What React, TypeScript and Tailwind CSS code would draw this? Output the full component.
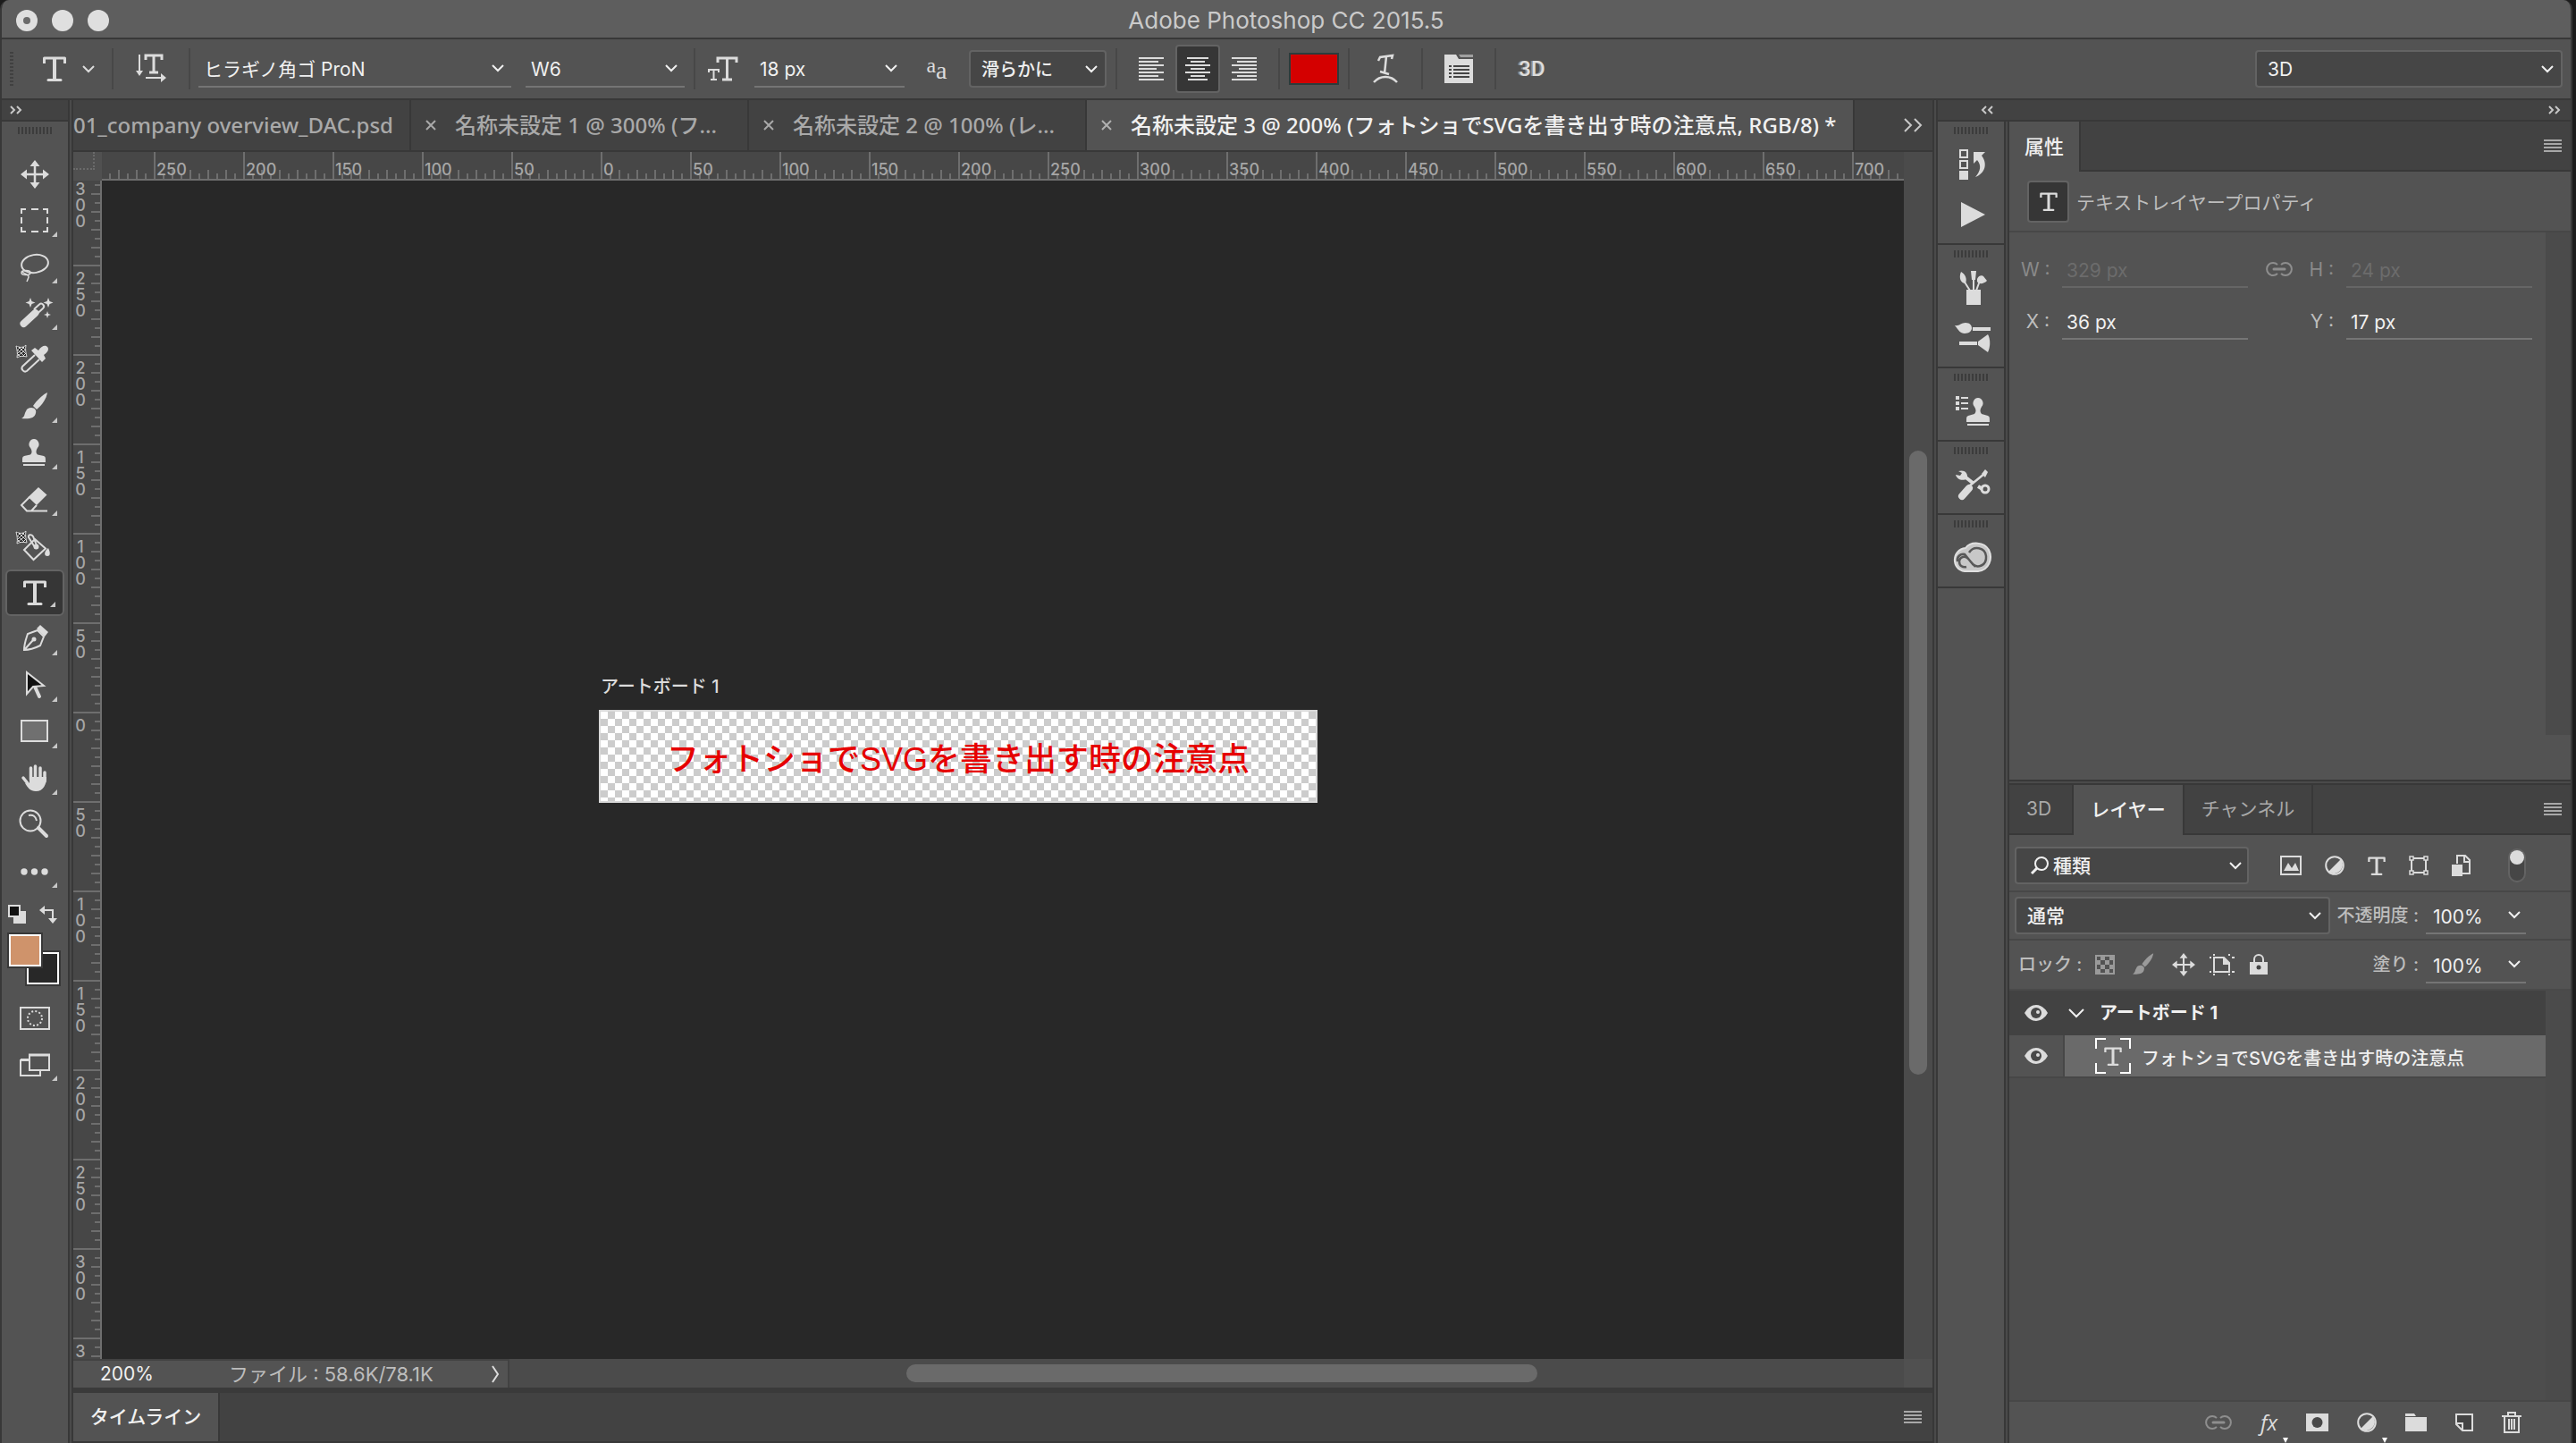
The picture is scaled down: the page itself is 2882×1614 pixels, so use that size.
import type { ReactNode } from 'react';
import clsx from 'clsx';

const TOP_UNITS = ['', '250', '200', '150', '100', '50', '0', '50', '100', '150', '200', '250', '300', '350', '400', '450', '500', '550', '600', '650', '700'];
const SIDE_UNITS = ['300', '250', '200', '150', '100', '50', '0', '50', '100', '150', '200', '250', '300', '3'];
const MINOR_TICKS = [1, 2, 3, 4, 5, 6, 7, 8, 9];

interface IconProps {
  w?: number;
  h?: number;
  children: ReactNode;
  className?: string;
}

function Icon({ w = 40, h = 40, children, className }: IconProps) {
  return (
    <svg
      width={w}
      height={h}
      viewBox={`0 0 ${w} ${h}`}
      fill="none"
      stroke="currentColor"
      strokeWidth="2"
      aria-hidden="true"
      className={clsx('shrink-0 overflow-visible', className)}
    >
      {children}
    </svg>
  );
}

function Chevron({ className }: { className?: string }) {
  return (
    <Icon w={14} h={8} className={className}>
      <path d="M1 1l6 6 6-6" />
    </Icon>
  );
}

function DoubleChevron({ left, big }: { left?: boolean; big?: boolean }) {
  return (
    <svg
      width={big ? 22 : 14}
      height={big ? 16 : 10}
      viewBox={big ? '0 0 22 16' : '0 0 14 10'}
      fill="none"
      stroke="currentColor"
      strokeWidth="2"
      aria-hidden="true"
      className={clsx('shrink-0', left && 'rotate-180')}
    >
      <path d={big ? 'M1 1l7 7-7 7M12 1l7 7-7 7' : 'M1 1l4 4-4 4M8 1l4 4-4 4'} />
    </svg>
  );
}

function MenuButton({ label }: { label: string }) {
  return (
    <button type="button" aria-label={label} className="text-[#a8a8a8]">
      <Icon w={20} h={14}>
        <path d="M0 1h20M0 5h20M0 9h20M0 13h20" />
      </Icon>
    </button>
  );
}

function TypeIcon({ w = 26, h = 28 }: { w?: number; h?: number }) {
  return (
    <svg width={w} height={h} viewBox="0 0 26 28" fill="none" stroke="currentColor" aria-hidden="true" className="shrink-0">
      <path d="M1.500 8V2h23v6" strokeWidth="3" strokeLinejoin="round" />
      <path d="M13 2v24" strokeWidth="4" />
      <path d="M6 26.500h14" strokeWidth="3" strokeLinecap="round" />
    </svg>
  );
}

function AdjustIcon() {
  return (
    <Icon w={22} h={22}>
      <circle cx="11" cy="11" r="9.800" />
      <path d="M18 4A10 10 0 0 1 4 18z" fill="currentColor" stroke="none" />
    </Icon>
  );
}

function LinkIcon() {
  return (
    <Icon w={30} h={18} className="text-[#8e8e8e]">
      <path d="M13 4a7 7 0 1 0 0 10M17 4a7 7 0 1 1 0 10" />
      <path d="M9 9h12" strokeWidth="3" strokeLinecap="round" />
    </Icon>
  );
}

function MoveIcon({ size = 32 }: { size?: number }) {
  return (
    <svg width={size} height={size} viewBox="0 0 32 32" aria-hidden="true" className="shrink-0">
      <path d="M4 16h24M16 4v24" stroke="currentColor" strokeWidth="2.500" />
      <path d="M16 0l5.500 7h-11zM16 32l5.500-7h-11zM0 16l7-5.500v11zM32 16l-7-5.500v11z" fill="currentColor" />
    </svg>
  );
}

function Mesh() {
  return (
    <g strokeWidth="1">
      <path d="M0 2c4 2 8 2 11-1-1 5 0 9 1 13-4-1-8-1-11 1 1-5 0-9-1-13z" fill="#222" />
      <path d="M3 3l8 8M1 6l8 7M7 3l4 4M1 10l4 4M9 3l-8 8M11 6l-9 7M5 3L1 7M11 10l-4 4" />
    </g>
  );
}

function Brush({ size = 40 }: { size?: number }) {
  return (
    <svg width={size} height={size} viewBox="0 0 40 40" fill="currentColor" aria-hidden="true" className="shrink-0">
      <path d="M34 4c-6 3-12 9-16 15l4 4c6-5 11-12 12-19z" />
      <path d="M16 21c4 0 6 3 5 6-1 6-8 7-16 6 4-2 3-5 5-8 1-3 3-4 6-4z" />
    </svg>
  );
}

const TOOLS: { label: string; flyout?: boolean; active?: boolean; icon: ReactNode }[] = [
  { label: '移動ツール', icon: <MoveIcon /> },
  {
    label: '長方形選択ツール',
    flyout: true,
    icon: (
      <Icon>
        <path d="M5 12V7h5M16 7h8M29 7h5v5M34 16v7M34 27v5h-5M24 32h-8M10 32H5v-5M5 23v-7" />
      </Icon>
    ),
  },
  {
    label: 'なげなわツール',
    flyout: true,
    icon: (
      <Icon>
        <ellipse cx="20" cy="16" rx="15" ry="10" transform="rotate(-9 20 16)" />
        <ellipse cx="10" cy="26" rx="5" ry="2.500" strokeWidth="1.500" />
        <path d="M6 24c0 4 8 3 7 7-1 3-1 3-2 5" strokeWidth="1.500" />
      </Icon>
    ),
  },
  {
    label: '自動選択ツール',
    flyout: true,
    icon: (
      <Icon>
        <path d="M7.500 31l13-12" strokeWidth="8" strokeLinecap="round" />
        <path d="M19 15l6-5.500a3 3 0 0 1 4 4.500l-6 5.500" />
        <g fill="currentColor" stroke="none">
          <path d="M15 2l1.500 4 4 1.500-4 1.500-1.500 4-1.500-4-4-1.500 4-1.500z" />
          <path d="M35 2l1.500 4 4 1.500-4 1.500-1.500 4-1.500-4-4-1.500 4-1.500z" />
          <path d="M34 17l1 3 3 1-3 1-1 3-1-3-3-1 3-1z" />
        </g>
      </Icon>
    ),
  },
  {
    label: 'スポイトツール',
    icon: (
      <Icon>
        <g transform="translate(-1 2)"><Mesh /></g>
        <path d="M20 14L6 27c-2 3 2 7 5 5l14-13" />
        <path d="M16 9l4-3 4 3c4-6 8-6 10-4s1 6-4 9l2 4-4 4z" fill="currentColor" stroke="none" />
      </Icon>
    ),
  },
  { label: 'ブラシツール', flyout: true, icon: <Brush /> },
  {
    label: 'コピースタンプツール',
    flyout: true,
    icon: (
      <Icon>
        <path
          d="M19 4a6 6 0 0 1 4 10c-2 3-2 6 0 7.500l7 1.500c2 1 2 2 2 7H6c0-5 0-6 2-7l7-1.500c2-1.500 2-4.500 0-7.500a6 6 0 0 1 4-10z"
          fill="currentColor"
          stroke="none"
        />
        <path d="M7 33h24" />
      </Icon>
    ),
  },
  {
    label: '消しゴムツール',
    flyout: true,
    icon: (
      <Icon>
        <path d="M24 6l9.500 8.500L22 26l-9.500-9z" fill="currentColor" stroke="none" />
        <path d="M14 17l-9 9 6 6.500h5l6-6.500M11 32.500h23" />
      </Icon>
    ),
  },
  {
    label: '塗りつぶしツール',
    icon: (
      <Icon>
        <g transform="translate(-1 2)"><Mesh /></g>
        <path d="M20 12l12 10.500L18.500 35 8 24zM20 21l-7-11c-1-3 3-4 5-1l4 10" />
        <circle cx="21.500" cy="20.500" r="2" fill="currentColor" />
        <path d="M35 22c2 4 3 9-1 9s-4-5 1-9z" fill="currentColor" stroke="none" />
      </Icon>
    ),
  },
  { label: '横書き文字ツール', flyout: true, active: true, icon: <TypeIcon /> },
  {
    label: 'ペンツール',
    flyout: true,
    icon: (
      <Icon>
        <path d="M8 32c0-7 2-12 4-18l11-4 7 7-4 10c-6 3-12 5-18 5zM8 32l10-11" />
        <path d="M22 8l4-4 9 8-4 5z" fill="currentColor" stroke="none" />
        <circle cx="19" cy="20" r="2.500" fill="currentColor" stroke="none" />
      </Icon>
    ),
  },
  {
    label: 'パスコンポーネント選択ツール',
    flyout: true,
    icon: (
      <Icon>
        <path d="M20 21l5 11" strokeWidth="4" strokeLinecap="round" />
        <path d="M11 5v24l7-8 12-1z" fill="#111" />
      </Icon>
    ),
  },
  {
    label: '長方形ツール',
    flyout: true,
    icon: (
      <Icon>
        <path d="M5 7h29v23H5z" fill="#707070" />
      </Icon>
    ),
  },
  {
    label: '手のひらツール',
    flyout: true,
    icon: (
      <Icon>
        <g strokeWidth="3.500" strokeLinecap="round">
          <path d="M15.500 8v13M20.500 6v14M26 8v13M31 13v10M7 19l8 10" />
        </g>
        <path d="M14 18h19c0 8-3 16-12 16-6 0-9-4-12-9l5 1z" fill="currentColor" stroke="none" />
      </Icon>
    ),
  },
  {
    label: 'ズームツール',
    icon: (
      <Icon>
        <circle cx="15" cy="15" r="11.500" />
        <path d="M13 9c5-1 8 1 9 6" />
        <path d="M24 23l9 9" strokeWidth="4" strokeLinecap="round" />
      </Icon>
    ),
  },
  {
    label: 'ツールバーを編集',
    flyout: true,
    icon: (
      <Icon>
        <g fill="currentColor" stroke="none">
          <circle cx="8" cy="20" r="3.700" />
          <circle cx="19.500" cy="20" r="3.700" />
          <circle cx="31" cy="20" r="3.700" />
        </g>
      </Icon>
    ),
  },
];

function Grip() {
  return (
    <div className="mx-auto h-2 w-[38px] bg-[repeating-linear-gradient(90deg,#3c3c3c_0_2px,transparent_2px_4px)]" />
  );
}

function Flyout() {
  return <span className="absolute right-2 bottom-2 size-[6px] bg-[#c8c8c8] [clip-path:polygon(100%_0,100%_100%,0_100%)]" />;
}

function Gutter() {
  return <div className="w-[6px] shrink-0 border-x-2 border-[#383838] bg-[#4a4a4a]" />;
}

function Separator() {
  return <div className="h-[46px] w-[2px] shrink-0 bg-[#474747]" />;
}

interface SelectProps {
  label: string;
  value: string;
  className?: string;
  boxed?: boolean;
}

function Select({ label, value, className, boxed }: SelectProps) {
  return (
    <div
      className={clsx(
        'grid h-[42px] shrink-0 items-center',
        boxed ? 'rounded-[4px] border-2 border-[#636363] bg-[#464646]' : 'border-b-2 border-[#757575]',
        className,
      )}
    >
      <select
        aria-label={label}
        className={clsx('[grid-area:1/1] h-full w-full appearance-none bg-transparent', boxed ? 'pt-[2px] pl-[12px]' : 'pt-1 pl-[6px]')}
      >
        <option>{value}</option>
      </select>
      <Chevron className="pointer-events-none [grid-area:1/1] mr-[8px] justify-self-end" />
    </div>
  );
}

function OptionsBar() {
  return (
    <div className="flex h-[68px] shrink-0 items-center border-b-2 border-[#383838] bg-[#535353] px-[9px] text-[21px] text-[#f0f0f0]">
      <div className="h-[38px] w-[4px] bg-[repeating-linear-gradient(#404040_0_2px,transparent_2px_4px)]" />
      <button type="button" aria-label="ツールプリセット" className="flex w-[110px] items-center gap-[18px] pl-[33px] text-[#dcdcdc]">
        <TypeIcon />
        <Chevron />
      </button>
      <Separator />
      <button type="button" aria-label="テキストの方向の切り替え" className="flex w-[84px] justify-center text-[#dcdcdc]">
        <Icon w={34} h={32}>
          <path d="M4 0v20M11 26h20" />
          <path d="M0 18l4 6 4-6zM28 21l6 5-6 5z" fill="currentColor" stroke="none" />
          <path d="M11 6V1h18v5M20 1v19M15 20h10" strokeWidth="3" />
        </Icon>
      </button>
      <Separator />
      <Select label="フォント" value="ヒラギノ角ゴ ProN" className="ml-[9px] w-[350px]" />
      <Select label="フォントスタイル" value="W6" className="mr-[10px] ml-4 w-[178px]" />
      <Separator />
      <div className="flex w-[66px] pl-[14px] text-[#dcdcdc]">
        <Icon w={34} h={28}>
          <path d="M11 7V2h21v5M21.500 2v24M16 26h11" strokeWidth="3" />
          <path d="M1 18v-3h11v3M6.500 15v11M3 26h7" />
        </Icon>
      </div>
      <Select label="フォントサイズ" value="18 px" className="w-[168px]" />
      <div className="flex w-[72px] justify-center font-['Liberation_Serif',serif] text-[#dcdcdc]">
        <span className="text-[24px] leading-[24px]">a</span>
        <span className="pt-1 text-[28px] leading-[28px]">a</span>
      </div>
      <Select label="アンチエイリアスの種類" value="滑らかに" boxed className="mr-[10px] w-[154px] text-[20px] font-medium" />
      <Separator />
      <div className="flex w-[180px] items-center justify-center gap-[2px] text-[#dcdcdc]">
        <button type="button" aria-label="左揃え" className="flex h-[54px] w-[50px] items-center justify-center">
          <Icon w={28} h={26}>
            <path d="M0 1h28M0 5h22M0 9h28M0 13h20M0 17h28M0 21h22M0 25h28" />
          </Icon>
        </button>
        <button
          type="button"
          aria-label="中央揃え"
          aria-pressed="true"
          className="flex h-[54px] w-[50px] items-center justify-center rounded-[4px] border-2 border-[#636363] bg-[#363636]"
        >
          <Icon w={28} h={26}>
            <path d="M2 1h24M6 5h16M0 9h28M6 13h16M0 17h28M6 21h16M3 25h22" />
          </Icon>
        </button>
        <button type="button" aria-label="右揃え" className="flex h-[54px] w-[50px] items-center justify-center">
          <Icon w={28} h={26}>
            <path d="M0 1h28M6 5h22M0 9h28M8 13h20M0 17h28M6 21h22M0 25h28" />
          </Icon>
        </button>
      </div>
      <Separator />
      <button type="button" aria-label="テキストカラー" className="mx-[10px] h-[36px] w-[56px] border-2 border-[#2c3c3c] bg-[#d40000]" />
      <Separator />
      <button type="button" aria-label="ワープテキスト" className="flex w-[80px] justify-center text-[#dcdcdc]">
        <Icon w={28} h={32}>
          <path d="M6 7l2-4 14-2-1 4M15 2l-2 19M8 19l10 3M1 31c7-8 19-8 26 0" strokeWidth="2.500" />
        </Icon>
      </button>
      <Separator />
      <button type="button" aria-label="文字パネルの切り替え" className="flex w-[80px] justify-center text-[#dcdcdc]">
        <Icon w={32} h={32}>
          <path d="M0 0h13l3 5h16v27H0z" fill="currentColor" stroke="none" />
          <path d="M16 0h16v3H18z" fill="#a0a0a0" stroke="none" />
          <path d="M5 13h3M10 13h18M5 17h3M10 17h18M5 21h3M10 21h18M5 25h3M10 25h18" stroke="#444" />
        </Icon>
      </button>
      <Separator />
      <button type="button" className="w-[80px] text-center font-['Roboto',sans-serif] text-[24px] font-medium text-[#dcdcdc] [text-shadow:-2px_0_#8a8a8a]">
        3D
      </button>
      <Select label="ワークスペース" value="3D" boxed className="ml-auto w-[344px]" />
    </div>
  );
}

function ToolBar() {
  return (
    <div className="flex w-[74px] shrink-0 flex-col bg-[#535353]">
      <div className="flex h-[24px] items-center border-b-2 border-[#383838] bg-[#424242] pl-[9px] text-[#c8c8c8]">
        <DoubleChevron />
      </div>
      <div className="pt-[6px] pb-[19px]">
        <Grip />
      </div>
      <div className="flex flex-col items-center text-[#dcdcdc]">
        {TOOLS.map(tool => (
          <button
            key={tool.label}
            type="button"
            aria-label={tool.label}
            className={clsx(
              'relative flex h-[52px] w-[66px] items-center justify-center',
              tool.active && 'rounded-[6px] border-2 border-[#636363] bg-[#363636]',
            )}
          >
            {tool.icon}
            {tool.flyout && <Flyout />}
          </button>
        ))}
      </div>
      <div className="flex justify-between px-[7px] pt-[11px] text-[#dcdcdc]">
        <button type="button" aria-label="初期設定の描画色と背景色">
          <Icon w={20} h={21}>
            <path d="M6 7h14v14H6z" fill="currentColor" stroke="none" />
            <path d="M1 1h12v12H1z" fill="#111" />
          </Icon>
        </button>
        <button type="button" aria-label="描画色と背景色を入れ替え" className="mr-[5px]">
          <Icon w={20} h={20}>
            <path d="M5 5h10v10" />
            <path d="M0 5l6-5v10zM10 14h10l-5 6z" fill="currentColor" stroke="none" />
          </Icon>
        </button>
      </div>
      <div className="grid grid-cols-[20px_20px_20px] grid-rows-[20px_20px_20px] px-[6px] pt-[10px]">
        <button
          type="button"
          aria-label="背景色"
          className="col-start-2 col-end-4 row-start-2 row-end-4 border-2 border-[#383838] bg-[#282828] outline-2 -outline-offset-4 outline-white"
        />
        <button
          type="button"
          aria-label="描画色"
          className="col-start-1 col-end-3 row-start-1 row-end-3 border-2 border-[#383838] bg-[#cf936b] outline-2 -outline-offset-4 outline-white"
        />
      </div>
      <div className="flex flex-col items-center pt-[10px] text-[#dcdcdc]">
        <button type="button" aria-label="クイックマスクモード" className="flex h-[52px] w-[66px] items-center justify-center">
          <Icon w={34} h={26}>
            <path d="M1 1h32v24H1z" />
            <circle cx="17" cy="13" r="8" strokeDasharray="2 2.200" />
          </Icon>
        </button>
        <button type="button" aria-label="スクリーンモード" className="relative flex h-[52px] w-[66px] items-center justify-center">
          <Icon w={34} h={26}>
            <path d="M11 8H1v17h22v-5M1 7h10" />
            <path d="M11 2h22v17H11z" />
            <path d="M10 2h24" strokeWidth="3" />
          </Icon>
          <Flyout />
        </button>
      </div>
    </div>
  );
}

const DOCUMENTS = ['名称未設定 1 @ 300% (フ...', '名称未設定 2 @ 100% (レ...'];

function CloseIcon() {
  return (
    <Icon w={14} h={14}>
      <path d="M2 2l10 10M12 2L2 12" />
    </Icon>
  );
}

function DocumentTabs() {
  return (
    <div className="flex h-[58px] shrink-0 border-b-2 border-[#383838] bg-[#424242] font-['Noto_Sans','Noto_Sans_CJK_JP',sans-serif] text-[24px] font-medium whitespace-nowrap text-[#a9a9a9]">
      <button type="button" className="flex w-[378px] shrink-0 items-center justify-end overflow-hidden border-r-2 border-[#383838] pr-[18px]">
        01_company overview_DAC.psd
      </button>
      {DOCUMENTS.map(name => (
        <button key={name} type="button" className="flex w-[378px] shrink-0 items-center gap-5 border-r-2 border-[#383838] pl-[15px]">
          <CloseIcon />
          {name}
        </button>
      ))}
      <button type="button" className="flex shrink-0 items-center gap-5 border-r-2 border-[#383838] bg-[#535353] pr-[18px] pl-[15px] text-[#f0f0f0]">
        <span className="text-[#b0b0b0]"><CloseIcon /></span>
        名称未設定 3 @ 200% (フォトショでSVGを書き出す時の注意点, RGB/8) *
      </button>
      <button type="button" aria-label="その他のドキュメント" className="mr-[10px] ml-auto text-[#c8c8c8]">
        <DoubleChevron big />
      </button>
    </div>
  );
}

function TopRuler() {
  return (
    <div className="flex h-[32px] min-w-0 flex-1 overflow-hidden border-b-2 border-[#6e6e6e] bg-[#474747]">
      <div className="-ml-[42px] flex">
        {TOP_UNITS.map((unit, i) => (
          <div key={i} className="grid w-[100px] shrink-0 border-l-2 border-[#6e6e6e]">
            <div className="[grid-area:1/1] flex items-end gap-2 pl-2">
              {MINOR_TICKS.map(t => (
                <span key={t} className={clsx('w-[2px] bg-[#6e6e6e]', t % 2 ? 'h-[6px]' : 'h-[10px]')} />
              ))}
            </div>
            <span className="[grid-area:1/1] self-end pl-px leading-[20px]">{unit}</span>
          </div>
        ))}
      </div>
    </div>
  );
}

function SideRuler() {
  return (
    <div className="w-[32px] shrink-0 overflow-hidden border-r-2 border-[#6e6e6e] bg-[#474747]">
      <div className="-mt-[6px]">
        {SIDE_UNITS.map((unit, i) => (
          <div key={i} className="grid h-[100px] border-t-2 border-[#6e6e6e]">
            <div className="[grid-area:1/1] flex flex-col items-end gap-2 pt-2">
              {MINOR_TICKS.map(t => (
                <span key={t} className={clsx('h-[2px] shrink-0 bg-[#6e6e6e]', t % 2 ? 'w-[6px]' : 'w-[10px]')} />
              ))}
            </div>
            <div className="[grid-area:1/1] flex w-[16px] flex-col items-center pt-[5px] leading-[18px]">
              {unit.split('').map((digit, d) => (
                <span key={d}>{digit}</span>
              ))}
            </div>
          </div>
        ))}
      </div>
    </div>
  );
}

function Canvas() {
  return (
    <div className="relative min-w-0 flex-1 overflow-hidden bg-[#282828]">
      <div className="absolute top-[548px] left-[556px]">
        <p className="pl-[2px] text-[20px] leading-[36px] font-medium text-[#dcdcdc]">アートボード 1</p>
        <div className="mt-2 flex h-[104px] w-[804px] items-center justify-center border-2 border-[#d8d8d8] bg-[repeating-conic-gradient(#ccc_0_25%,#fff_0_50%)] bg-[length:16px_16px] pt-2">
          <p className="font-['Liberation_Sans','Noto_Sans_CJK_JP',sans-serif] text-[36px] font-medium whitespace-nowrap text-[#e60000]">
            フォトショでSVGを書き出す時の注意点
          </p>
        </div>
      </div>
    </div>
  );
}

function Document() {
  return (
    <div className="flex min-w-0 flex-1 flex-col bg-[#3a3a3a]">
      <DocumentTabs />
      <div className="flex min-h-0 flex-1">
        <div className="flex min-w-0 flex-1 flex-col text-[18px] font-medium text-[#a6a6a6]">
          <div className="flex">
            <div className="grid w-[32px] shrink-0 grid-cols-[24px_1fr] grid-rows-[20px_1fr] bg-[#505050]">
              <div className="border-r-2 border-b-2 border-dotted border-[#6a6a6a]" />
            </div>
            <TopRuler />
          </div>
          <div className="flex min-h-0 flex-1">
            <SideRuler />
            <Canvas />
          </div>
        </div>
        <div className="flex w-[32px] shrink-0 flex-col bg-[#4b4b4b] px-[6px] pt-[334px]">
          <div className="h-[698px] rounded-full bg-[#6a6a6a]" />
        </div>
      </div>
      <div className="flex h-[32px] shrink-0 bg-[#4b4b4b] text-[21px]">
        <div className="flex w-[488px] items-center border-t-2 border-r-2 border-[#424242] bg-[#535353] pl-[30px]">
          <input aria-label="ズーム率" defaultValue="200%" className="w-[144px] bg-transparent text-[#f0f0f0]" />
          <span className="text-[22px] leading-[28px] whitespace-nowrap text-[#bdbdbd]">ファイル : 58.6K/78.1K</span>
          <button type="button" aria-label="ステータス表示" className="mr-[10px] ml-auto text-[#dcdcdc]">
            <Icon w={8} h={20}>
              <path d="M1 1l6 9-6 9" />
            </Icon>
          </button>
        </div>
        <div className="grid flex-1 grid-cols-[444fr_706fr_410fr] items-center">
          <div className="col-start-2 h-[20px] rounded-full bg-[#6a6a6a]" />
        </div>
        <div className="w-[32px] bg-[#505050]" />
      </div>
      <div className="mt-[6px] flex h-[56px] shrink-0 items-stretch border-b-2 border-[#383838] bg-[#424242]">
        <button type="button" className="w-[164px] border-r-2 border-[#383838] bg-[#535353] text-[21px] font-medium text-[#f0f0f0]">
          タイムライン
        </button>
        <div className="mr-[12px] ml-auto flex items-center">
          <MenuButton label="タイムラインメニュー" />
        </div>
      </div>
    </div>
  );
}

const DOCK: { label: string; icon: ReactNode }[][] = [
  [
    {
      label: 'ヒストリー',
      icon: (
        <Icon w={32} h={34}>
          <path d="M2 1h8v8H2zM2 13h8v8H2z" />
          <path d="M1 24h10v10H1z" fill="currentColor" stroke="none" />
          <path d="M17 3h13l-4 4c7 9 4 20-7 24 6-7 7-13 2-19l-4 4z" fill="currentColor" stroke="none" />
        </Icon>
      ),
    },
    {
      label: 'アクション',
      icon: (
        <Icon w={28} h={28}>
          <path d="M1 0l27 14L1 28z" fill="currentColor" stroke="none" />
        </Icon>
      ),
    },
  ],
  [
    {
      label: 'ブラシ',
      icon: (
        <Icon w={32} h={40}>
          <g fill="currentColor" stroke="none">
            <path d="M9 22h16v17H9z" />
            <path d="M3 2c5 3 7 8 5 13-5 0-8-6-5-13zM14 1h6l-1 10h-4zM21 10c2-5 6-4 7-3l4 5c-4 4-9 4-11 1z" />
          </g>
          <path d="M6 12l7 11M17 8v15M24 12l-4 11" />
        </Icon>
      ),
    },
    {
      label: 'ブラシプリセット',
      icon: (
        <Icon w={40} h={34}>
          <path d="M0 3c5 1 7-3 12-3s7 3 7 6-3 6-8 6C6 12 4 8 0 3z" fill="currentColor" stroke="none" />
          <path d="M37 13c3 5 3 14 0 20l-11-8v-4z" fill="currentColor" stroke="none" />
          <path d="M20 7h20M5 23h20" strokeWidth="4" />
        </Icon>
      ),
    },
  ],
  [
    {
      label: 'コピーソース',
      icon: (
        <Icon w={38} h={34}>
          <path d="M0 2h4M0 8h4M0 14h4" strokeWidth="4" />
          <path d="M6 2h8M6 8h8M6 14h8" />
          <path
            d="M25 2a6 6 0 0 1 4 10c-2 3-2 6 0 8l7 2c2 1 2 2 2 7H12c0-5 0-6 2-7l7-2c2-2 2-5 0-8a6 6 0 0 1 4-10z"
            fill="currentColor"
            stroke="none"
          />
          <path d="M13 32h24" />
        </Icon>
      ),
    },
  ],
  [
    {
      label: 'ツールプリセット',
      icon: (
        <Icon w={38} h={34}>
          <path d="M16 18L32 5" strokeWidth="2.500" />
          <path d="M33 0l3 3-3 6-4-4z" fill="currentColor" stroke="none" />
          <path d="M7 30l8-9" strokeWidth="8" strokeLinecap="round" />
          <path d="M10 8l9 7M25 19l5 3" strokeWidth="4" />
          <circle cx="33" cy="22" r="4" strokeWidth="3" />
          <path d="M3 2c6-2 11 1 10 8-5 4-12 1-13-4l5 1 2-3z" fill="currentColor" stroke="none" />
        </Icon>
      ),
    },
  ],
  [
    {
      label: 'CC ライブラリ',
      icon: (
        <Icon w={42} h={34}>
          <path
            d="M13 6C19-2 34-1 39 8c5 10 0 23-12 24H12C-3 30-3 8 13 6z"
            fill="#c8c8c8"
            stroke="#e0e0e0"
          />
          <path
            d="M24 27l-8-9c-4-5-10-1-10 3 0 5 4 7 8 6M17 11c5-8 18-6 19 4 1 11-10 14-15 9L12 13c-5-1-9 3-8 8"
            stroke="#585858"
            strokeWidth="2.500"
          />
        </Icon>
      ),
    },
  ],
];

function Dock() {
  return (
    <div className="flex w-[74px] shrink-0 flex-col bg-[#535353] text-[#dcdcdc]">
      {DOCK.map((group, i) => (
        <div key={i} className="border-b-2 border-[#383838] pt-[6px] pb-1">
          <Grip />
          <div className="flex flex-col items-center pt-[6px]">
            {group.map(item => (
              <button key={item.label} type="button" aria-label={item.label} className="flex h-[56px] w-full items-center justify-center pl-1">
                {item.icon}
              </button>
            ))}
          </div>
        </div>
      ))}
    </div>
  );
}

interface FieldProps {
  label: string;
  value: string;
  disabled?: boolean;
}

function Field({ label, value, disabled }: FieldProps) {
  return (
    <label className={clsx('flex h-[42px] items-center', disabled ? 'text-[#8a8a8a]' : 'text-[#bdbdbd]')}>
      <span className="w-[46px] pt-[2px] pr-[14px] text-right whitespace-nowrap">{label} :</span>
      <input
        defaultValue={value}
        disabled={disabled}
        className={clsx(
          'h-full w-[208px] border-b-2 bg-transparent pt-1 pl-[5px]',
          disabled ? 'border-[#666] text-[#6c6c6c]' : 'border-[#757575] text-[#f0f0f0]',
        )}
      />
    </label>
  );
}

function PropertiesPanel() {
  return (
    <section className="flex h-[738px] shrink-0 flex-col border-b-2 border-[#383838] bg-[#535353]">
      <div className="flex h-[56px] shrink-0 bg-[#424242]">
        <button type="button" className="w-[80px] border-r-2 border-[#383838] bg-[#535353] text-[22px] font-medium text-[#f0f0f0]">
          属性
        </button>
        <div className="flex flex-1 items-center justify-end border-b-2 border-[#383838] pr-[10px]">
          <MenuButton label="属性メニュー" />
        </div>
      </div>
      <div className="flex h-[68px] shrink-0 items-center gap-2 border-b-2 border-[#474747] pl-[20px] text-[#bdbdbd]">
        <span className="flex h-[47px] w-[47px] items-center justify-center rounded-[4px] border-2 border-[#636363] bg-[#363636] text-[#dcdcdc]">
          <TypeIcon w={20} h={21} />
        </span>
        <h2 className="pt-1 text-[21px]">テキストレイヤープロパティ</h2>
      </div>
      <div className="flex h-[562px]">
        <div className="flex flex-1 flex-col gap-[16px] pt-[20px] pl-[13px] text-[21px]">
          <div className="flex items-center">
            <Field label="W" value="329 px" disabled />
            <button type="button" aria-label="縦横比を固定" className="flex w-[64px] pl-[20px]">
              <LinkIcon />
            </button>
            <Field label="H" value="24 px" disabled />
          </div>
          <div className="flex gap-[64px]">
            <Field label="X" value="36 px" />
            <Field label="Y" value="17 px" />
          </div>
        </div>
        <div className="w-[28px] bg-[#4b4b4b]" />
      </div>
    </section>
  );
}

function Eye() {
  return (
    <button type="button" aria-label="レイヤーの表示" className="flex w-[60px] shrink-0 items-center justify-center text-[#dcdcdc]">
      <Icon w={26} h={18}>
        <path d="M0 9C7-3 19-3 26 9 19 21 7 21 0 9z" fill="currentColor" stroke="none" />
        <circle cx="13" cy="9" r="6" fill="#484848" stroke="none" />
        <circle cx="15" cy="8" r="2" fill="currentColor" stroke="none" />
      </Icon>
    </button>
  );
}

function PercentField({ label }: { label: string }) {
  return (
    <label className="ml-auto flex items-center gap-[8px] text-[20px] font-medium text-[#bdbdbd]">
      {label} :
      <span className="grid h-[42px] w-[112px] items-center border-b-2 border-[#757575] font-normal text-[#f0f0f0]">
        <input defaultValue="100%" className="[grid-area:1/1] h-full w-full bg-transparent pt-1 pl-2 text-[21px]" />
        <Chevron className="[grid-area:1/1] mr-[6px] justify-self-end" />
      </span>
    </label>
  );
}

function FilterIcons() {
  return (
    <div className="flex flex-1 items-center gap-[26px] pl-[35px] text-[#dcdcdc]">
      <button type="button" aria-label="ピクセルレイヤー">
        <Icon w={24} h={22}>
          <path d="M1 1h22v20H1z" />
          <path d="M4 17l5-9 4 6 4-6 4 9z" fill="currentColor" stroke="none" />
        </Icon>
      </button>
      <button type="button" aria-label="調整レイヤー"><AdjustIcon /></button>
      <button type="button" aria-label="テキストレイヤー"><TypeIcon w={20} h={21} /></button>
      <button type="button" aria-label="シェイプレイヤー">
        <Icon w={22} h={22}>
          <path d="M3 3h16v16H3z" />
          <path d="M1 1h4v4H1zM17 1h4v4h-4zM1 17h4v4H1zM17 17h4v4h-4z" fill="#535353" strokeWidth="1.500" />
        </Icon>
      </button>
      <button type="button" aria-label="スマートオブジェクト">
        <Icon w={22} h={24}>
          <path d="M6 10V1h9l5 5v15h-8M14 1v7h7" />
          <path d="M0 11h12v13H0z" fill="currentColor" stroke="none" />
        </Icon>
      </button>
      <button
        type="button"
        role="switch"
        aria-checked="true"
        aria-label="レイヤーフィルター"
        className="mr-[50px] ml-auto flex h-[38px] w-[20px] items-start rounded-full border-2 border-[#636363] bg-[#464646]"
      >
        <span className="size-4 rounded-full bg-[#dcdcdc]" />
      </button>
    </div>
  );
}

function LayersPanel() {
  return (
    <section className="mt-[2px] flex min-h-0 flex-1 flex-col border-t-2 border-[#383838] bg-[#535353]">
      <div className="flex h-[56px] shrink-0 bg-[#424242] text-[21px] text-[#a9a9a9]">
        <button type="button" className="w-[72px] border-r-2 border-b-2 border-[#383838] pr-1">3D</button>
        <button type="button" className="w-[124px] border-r-2 border-[#383838] bg-[#535353] font-medium text-[#f0f0f0]">レイヤー</button>
        <button type="button" className="w-[144px] border-r-2 border-b-2 border-[#383838]">チャンネル</button>
        <div className="flex flex-1 items-center justify-end border-b-2 border-[#383838] pr-[10px]">
          <MenuButton label="レイヤーメニュー" />
        </div>
      </div>

      <div className="flex h-[64px] shrink-0 items-center border-b-2 border-[#474747] pt-[6px] pl-[6px]">
        <div className="grid h-[42px] w-[262px] shrink-0 items-center rounded-[4px] border-2 border-[#636363] bg-[#464646] text-[21px] font-medium text-[#f0f0f0]">
          <Icon w={20} h={20} className="pointer-events-none [grid-area:1/1] ml-4">
            <circle cx="12" cy="8" r="7" />
            <path d="M7 13l-6 6" strokeWidth="3" />
          </Icon>
          <select aria-label="フィルターの種類" className="[grid-area:1/1] h-full w-full appearance-none bg-transparent pt-[2px] pl-[41px]">
            <option>種類</option>
          </select>
          <Chevron className="pointer-events-none [grid-area:1/1] mr-[6px] justify-self-end" />
        </div>
        <FilterIcons />
      </div>

      <div className="flex h-[54px] shrink-0 items-center border-b-2 border-[#474747] pr-[50px] pl-[6px]">
        <Select label="描画モード" value="通常" boxed className="w-[353px] text-[21px] font-medium text-[#f0f0f0]" />
        <PercentField label="不透明度" />
      </div>

      <div className="flex h-[56px] shrink-0 items-center border-b-2 border-[#4a4a4a] pr-[50px] pl-[10px] text-[20px] font-medium text-[#bdbdbd]">
        <span className="w-[86px]">ロック :</span>
        <div className="flex items-center gap-[16px] text-[#dcdcdc]">
          <button type="button" aria-label="透明ピクセルをロック" className="text-[#9a9a9a]">
            <Icon w={22} h={22}>
              <path d="M1 1h20v20H1z" />
              <path d="M6 1h5v5H6zM16 1h5v5h-5zM1 6h5v5H1zM11 6h5v5h-5zM6 11h5v5H6zM16 11h5v5h-5zM1 16h5v5H1zM11 16h5v5h-5z" fill="currentColor" stroke="none" />
            </Icon>
          </button>
          <button type="button" aria-label="画像ピクセルをロック" className="text-[#9a9a9a]"><Brush size={32} /></button>
          <button type="button" aria-label="位置をロック"><MoveIcon size={26} /></button>
          <button type="button" aria-label="アートボードの自動ネストを防ぐ">
            <Icon w={28} h={24}>
              <path d="M5 4h11l6 6v10H5z" />
              <path d="M15 4h1l6 6v2h-7z" fill="currentColor" stroke="none" />
              <path d="M0 4h2M0 20h2M25 4h3M25 20h3M5 0v2M22 0v2M5 22v2M22 22v2" />
            </Icon>
          </button>
          <button type="button" aria-label="すべてをロック">
            <Icon w={22} h={24}>
              <path d="M6 10V6a5 5 0 0 1 10 0v4" />
              <path d="M1 9h20v14H1z" fill="currentColor" stroke="none" />
              <circle cx="11" cy="15" r="2.500" fill="#444" stroke="none" />
            </Icon>
          </button>
        </div>
        <PercentField label="塗り" />
      </div>

      <div className="flex min-h-0 flex-1 bg-[#4b4b4b]">
        <div className="flex flex-1 flex-col bg-[#4d4d4d] text-[20px] text-[#f0f0f0]">
          <div className="flex h-[50px] items-center bg-[#424242] font-bold">
            <Eye />
            <button type="button" aria-label="グループを閉じる" className="w-[41px] pl-[6px]">
              <Icon w={18} h={10}>
                <path d="M1 1l8 8 8-8" />
              </Icon>
            </button>
            アートボード 1
          </div>
          <div className="flex h-[48px] items-stretch border-b-2 border-[#474747] bg-[#535353] font-medium">
            <Eye />
            <div className="flex flex-1 items-center gap-[12px] border-l-2 border-[#474747] bg-[#6a6a6a] pl-[34px]">
              <span className="grid place-items-center">
                <Icon w={40} h={40} className="[grid-area:1/1] text-white">
                  <path d="M1 12V1h11M28 1h11v11M39 28v11H28M12 39H1V28" />
                </Icon>
                <span className="[grid-area:1/1] text-[#dcdcdc]">
                  <TypeIcon w={20} h={21} />
                </span>
              </span>
              <span className="pt-[6px]">フォトショでSVGを書き出す時の注意点</span>
            </div>
          </div>
        </div>
        <div className="w-[28px]" />
      </div>

      <div className="flex h-[48px] shrink-0 items-center justify-end gap-[32px] border-t-2 border-[#474747] pr-[55px] text-[#dcdcdc]">
        <button type="button" aria-label="レイヤーをリンク"><LinkIcon /></button>
        <button type="button" aria-label="レイヤースタイルを追加" className="relative font-['Open_Sans',sans-serif] text-[24px] leading-[30px] italic">
          fx
          <span className="absolute -right-3 -bottom-2 size-[6px] bg-white [clip-path:polygon(0_0,100%_0,50%_100%)]" />
        </button>
        <button type="button" aria-label="レイヤーマスクを追加">
          <Icon w={25} h={20}>
            <path d="M0 0h25v20H0z" fill="currentColor" stroke="none" />
            <circle cx="12.500" cy="10" r="6" fill="#484848" stroke="none" />
          </Icon>
        </button>
        <button type="button" aria-label="調整レイヤーを新規作成" className="relative">
          <AdjustIcon />
          <span className="absolute -right-3 -bottom-3 size-[6px] bg-white [clip-path:polygon(0_0,100%_0,50%_100%)]" />
        </button>
        <button type="button" aria-label="新規グループを作成">
          <Icon w={24} h={20}>
            <path d="M0 0h10l2 3H0zM0 4h24v16H0z" fill="currentColor" stroke="none" />
          </Icon>
        </button>
        <button type="button" aria-label="新規レイヤーを作成">
          <Icon w={20} h={20}>
            <path d="M1 1h18v18H8l-7-7zM1 11h7v8" fill="#444" />
          </Icon>
        </button>
        <button type="button" aria-label="レイヤーを削除">
          <Icon w={22} h={24}>
            <path d="M0 5h22M7 5V1h8v4M3 5v18h16V5M8 8v12M11 8v12M14 8v12" />
          </Icon>
        </button>
      </div>
    </section>
  );
}

export default function App() {
  return (
    <div className="h-screen min-h-[1300px] bg-[#1c1c1c] pr-1 font-['Inter','Noto_Sans_CJK_JP',sans-serif]">
      <div className="flex h-full flex-col overflow-hidden rounded-t-[10px] border-x-2 border-[#383838] bg-[#383838]">
        <header className="flex h-[44px] shrink-0 items-center justify-between border-b-2 border-[#383838] bg-[#5e5e5e] px-4 pt-1">
          <div className="flex flex-1 gap-4">
            <button type="button" aria-label="閉じる" className="flex size-6 items-center justify-center rounded-full bg-[#dfdfdf]">
              <span className="size-2 rounded-full bg-[#6a6a6a]" />
            </button>
            <button type="button" aria-label="しまう" className="size-6 rounded-full bg-[#dfdfdf]" />
            <button type="button" aria-label="拡大" className="size-6 rounded-full bg-[#dfdfdf]" />
          </div>
          <h1 className="text-[26px] leading-[30px] text-[#cacaca]">Adobe Photoshop CC 2015.5</h1>
          <div className="flex-1" />
        </header>
        <OptionsBar />
        <div className="flex min-h-0 flex-1">
          <ToolBar />
          <Gutter />
          <Document />
          <Gutter />
          <div className="flex w-[708px] shrink-0 flex-col">
            <div className="flex h-[24px] shrink-0 items-center justify-between border-b-2 border-[#383838] bg-[#424242] pr-[11px] pl-[48px] text-[#c8c8c8]">
              <DoubleChevron left />
              <DoubleChevron />
            </div>
            <div className="flex min-h-0 flex-1">
              <Dock />
              <Gutter />
              <div className="flex flex-1 flex-col bg-[#4a4a4a]">
                <PropertiesPanel />
                <LayersPanel />
              </div>
            </div>
          </div>
        </div>
      </div>
    </div>
  );
}
